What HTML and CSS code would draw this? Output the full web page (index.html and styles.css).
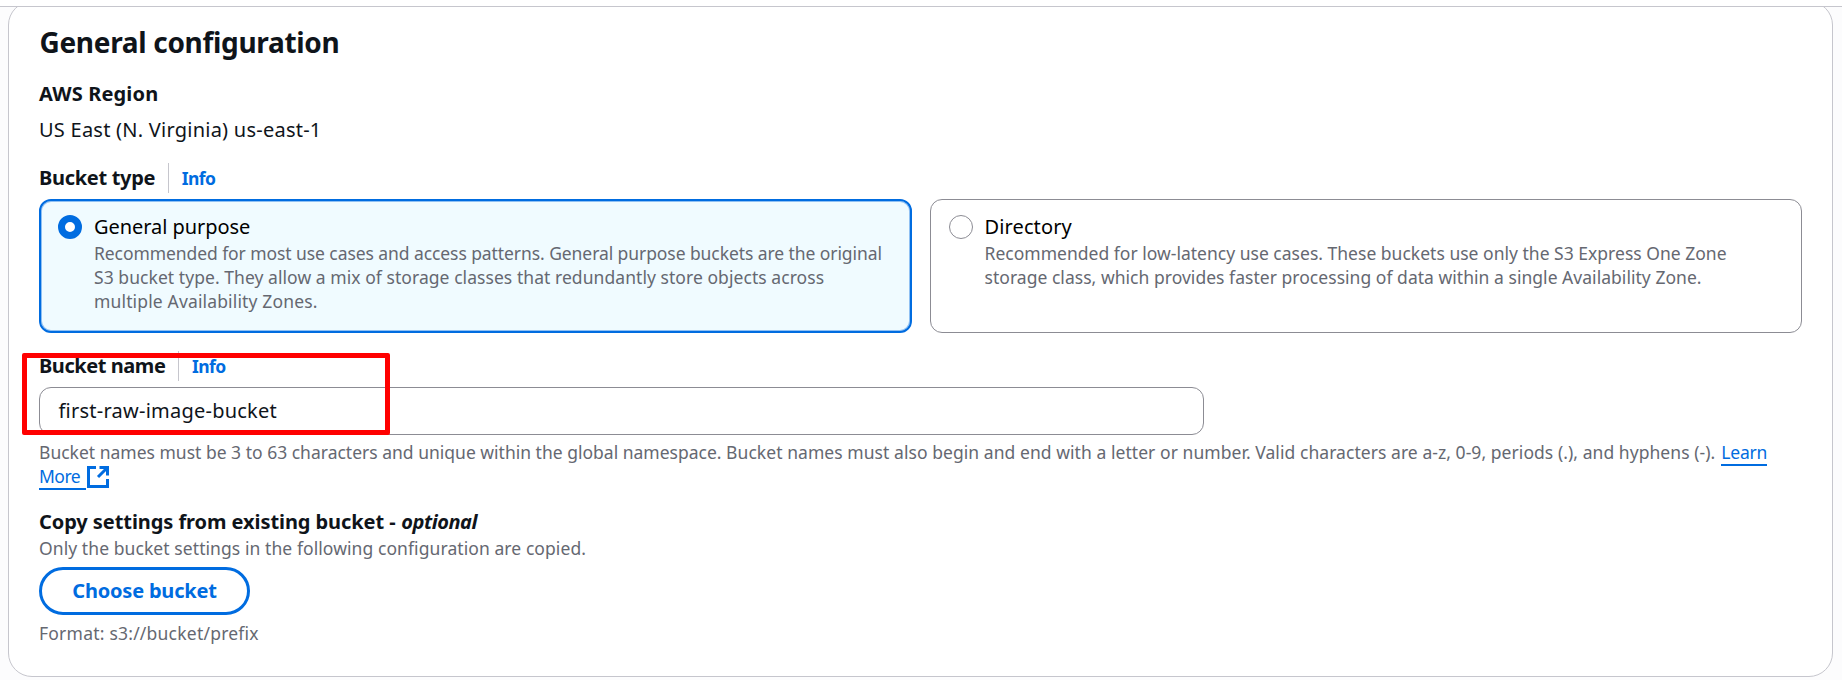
FILE: index.html
```html
<!DOCTYPE html>
<html lang="en">
<head>
<meta charset="utf-8">
<title>Create bucket</title>
<link rel="stylesheet" href="styles.css">
</head>
<body>
<div class="topbar"></div>
<main class="viewport">
  <section class="panel">
    <h2 class="title">General configuration</h2>

    <div class="region">
      <div class="label ls-region">AWS Region</div>
      <div class="value">US East (N. Virginia) us-east-1</div>
    </div>

    <div class="label-row">
      <span class="label ls-type">Bucket type</span><a class="info">Info</a>
    </div>
    <div class="tiles">
      <div class="tile tile-selected">
        <span class="radio radio-on"></span>
        <div>
          <div class="tile-title ls-general">General purpose</div>
          <div class="hint">
            <span class="line ls-g1">Recommended for most use cases and access patterns. General purpose buckets are the original</span>
            <span class="line ls-g2">S3 bucket type. They allow a mix of storage classes that redundantly store objects across</span>
            <span class="line ls-g3">multiple Availability Zones.</span>
          </div>
        </div>
      </div>
      <div class="tile">
        <span class="radio"></span>
        <div>
          <div class="tile-title ls-directory">Directory</div>
          <div class="hint">
            <span class="line ls-d1">Recommended for low-latency use cases. These buckets use only the S3 Express One Zone</span>
            <span class="line ls-d2">storage class, which provides faster processing of data within a single Availability Zone.</span>
          </div>
        </div>
      </div>
    </div>

    <div class="name-field">
      <div class="label-row">
        <span class="label ls-name">Bucket name</span><a class="info">Info</a>
      </div>
      <div class="input">first-raw-image-bucket</div>
      <div class="highlight"></div>
    </div>
    <div class="hint name-hint">
      <span class="line"><span class="ls-rules">Bucket names must be 3 to 63 characters and unique within the global namespace. <span class="ls-rules-2">Bucket names must also begin and end with a letter or number. Valid characters are a-z, 0-9, periods (.), and hyphens (-).</span></span><a class="link learn">Learn</a></span>
      <span class="line"><a class="link more">More</a><svg class="external" viewBox="0 0 22 22" fill="none" stroke="currentColor" stroke-width="3"><path d="M9 1.5H1.5v19h19V13"/><path d="M12.5 1.5h8V9.5"/><path d="M20.5 1.5L11 11"/></svg></span>
    </div>

    <div class="copy">
      <div class="label ls-copy">Copy settings from existing bucket - <i class="optional">optional</i></div>
      <div class="hint ls-only">Only the bucket settings in the following configuration are copied.</div>
      <button class="button" type="button">Choose bucket</button>
      <div class="hint ls-format">Format: s3://bucket/prefix</div>
    </div>
  </section>
</main>
</body>
</html>
```
FILE: styles.css
```css
* { box-sizing: border-box; }

body {
  margin: 0;
  height: 680px;
  overflow: hidden;
  background: #fcfcfd;
  color: #0f141a;
  font: 400 20px/30px "Noto Sans", "Open Sans", sans-serif;
}

.topbar {
  height: 7px;
  background: #fff;
  border-bottom: 1px solid #c6c6cd;
}

.viewport {
  height: 673px;
  overflow: hidden;
}

.panel {
  height: 676px;
  margin: -6px 9px 0 8px;
  padding: 22px 30px 0;
  background: #fff;
  border: 1px solid #c6c6cd;
  border-radius: 24px;
}

.title {
  margin: 0;
  padding-left: 0.5px;
  font-size: 28px;
  line-height: 36px;
  font-weight: 700;
  letter-spacing: -0.31px;
}

.region { margin-top: 18px; }

.label,
.value,
.tile-title {
  margin-bottom: -2px;
  line-height: 32px;
}

.label { font-weight: 700; }

.value { margin-top: 6px; letter-spacing: 0.24px; }

.label-row {
  display: flex;
  height: 30px;
  margin-top: 18px;
}

.info {
  margin: 1px 0 -1px 12.5px;
  padding-left: 13px;
  border-left: 1px solid #c6c6cd;
  color: #006ce0;
  font-size: 17.5px;
  line-height: 30px;
  font-weight: 700;
  letter-spacing: -0.55px;
}

.tiles {
  display: grid;
  grid-template-columns: 1fr 1fr;
  gap: 18px;
  margin-top: 7px;
}

.tile {
  display: flex;
  gap: 12px;
  height: 134px;
  padding: 11px 18px;
  border: 1px solid #8c8c94;
  border-radius: 12px;
}

.tile-selected {
  padding: 10px 17px;
  border: 2px solid #006ce0;
  background: #f0fbff;
  box-shadow: inset 0 0 0 1px #8fc0f3;
}

.radio {
  flex: none;
  width: 24px;
  height: 24px;
  margin-top: 4px;
  border: 1px solid #8c8c94;
  border-radius: 50%;
  background: #fff;
}

.radio-on { border: 7px solid #006ce0; }

.tile-title { color: #000; }

.hint {
  color: #656871;
  font-size: 17.5px;
  line-height: 24px;
}

.line {
  display: block;
  white-space: nowrap;
}

.name-field { position: relative; }
.name-field .label-row { margin-top: 17px; }

.input {
  width: 1165px;
  height: 48px;
  margin-top: 7px;
  padding: 8px 18.5px 0;
  border: 1px solid #8c8c94;
  border-radius: 12px;
  letter-spacing: 0.235px;
}

/* Annotation frame drawn over the name field */
.highlight {
  position: absolute;
  left: -17px;
  top: 3px;
  width: 368px;
  height: 82px;
  border: 5px solid #f00;
  border-radius: 2px;
}

.name-hint { margin-top: 5px; }

.link {
  display: inline-block;
  height: 26px;
  color: #006ce0;
  border-bottom: 2px solid #006ce0;
}

.learn { margin-left: 6px; letter-spacing: -0.2px; }
.more { width: 47px; letter-spacing: -0.5px; }

.name-hint .line { display: flex; height: 24px; }
.external { width: 22px; height: 22px; margin: 2px 0 0 1px; color: #006ce0; }

.copy { margin-top: 18px; }
.optional { margin-left: 0.5px; letter-spacing: -0.45px; }

.button {
  display: block;
  width: 211px;
  height: 48px;
  margin: 7px 0 6px;
  padding: 0 0 1px;
  border: 3px solid #006ce0;
  border-radius: 24px;
  background: #fff;
  color: #006ce0;
  font: 700 20px/30px "Noto Sans", "Open Sans", sans-serif;
  letter-spacing: -0.2px;
}

/* Per-line tracking */
.ls-region { letter-spacing: 0.15px; }
.ls-type { letter-spacing: -0.3px; }
.ls-general { letter-spacing: -0.06px; }
.ls-directory { letter-spacing: 0.12px; }
.ls-g1 { letter-spacing: -0.078px; }
.ls-g2 { letter-spacing: 0.057px; }
.ls-g3 { letter-spacing: 0.15px; }
.ls-d1 { letter-spacing: 0.013px; }
.ls-d2 { letter-spacing: 0.034px; }
.ls-name { letter-spacing: -0.44px; }
.ls-rules { letter-spacing: 0.002px; }
.ls-rules-2 { letter-spacing: 0.058px; }
.ls-copy { letter-spacing: -0.07px; }
.ls-only { letter-spacing: 0.078px; }
.ls-format { letter-spacing: 0.22px; }
```
